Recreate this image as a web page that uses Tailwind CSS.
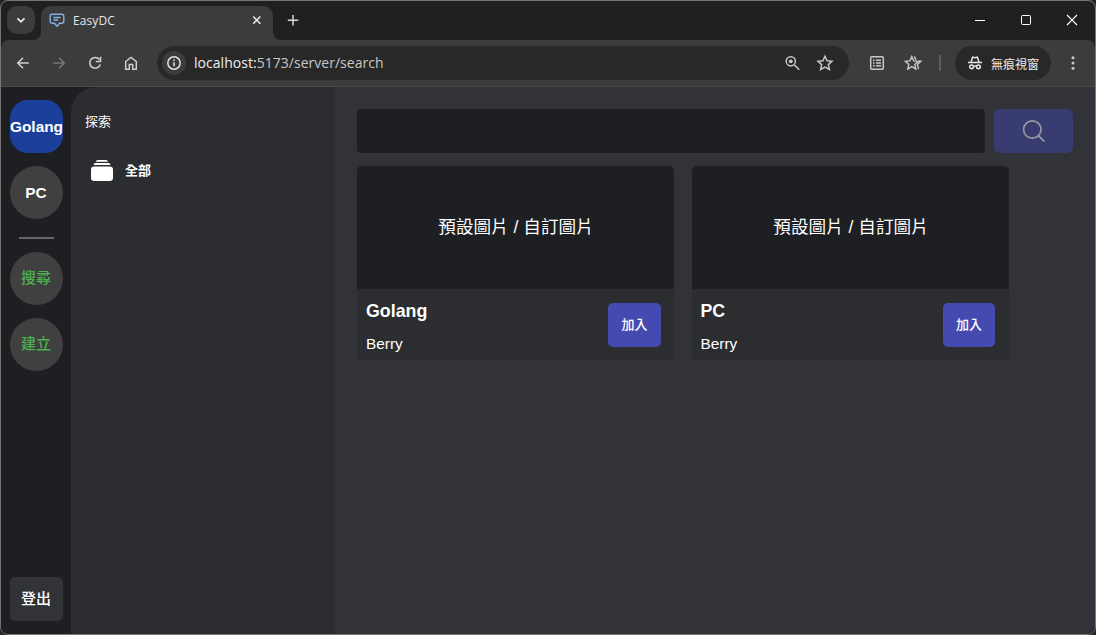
<!DOCTYPE html>
<html lang="zh-Hant">
<head>
<meta charset="utf-8">
<title>EasyDC</title>
<script src="https://cdn.jsdelivr.net/npm/@tailwindcss/browser@4"></script>
</head>
<body class="h-[635px] w-[1096px] overflow-hidden bg-[#23252a] font-['Liberation_Sans','Noto_Sans_CJK_TC',sans-serif] text-white">
<div class="flex h-[635px] w-[1096px] flex-col overflow-hidden rounded-lg border border-[#797474] bg-[#1f2120]">
  <!-- Tab strip -->
  <header class="flex h-[39px] shrink-0 pl-1.5">
    <button class="mt-[5px] flex size-7 items-center justify-center rounded-[10px] bg-[#3c3c3c]">
      <svg class="size-7" viewBox="0 0 28 28" fill="none" stroke="#e8e8e8" stroke-width="1.8"><path d="M10.500 12.300l3.500 3.500 3.500-3.500"/></svg>
    </button>
    <div class="relative mt-[5px] ml-1.5 flex h-[34px] w-[232px] rounded-t-[10px] bg-[#3c3c3c] pl-2">
      <svg class="absolute bottom-0 -left-2 size-2" viewBox="0 0 8 8" fill="#3c3c3c"><path d="M8 0v8H0a8 8 0 0 0 8-8z"/></svg>
      <svg class="absolute -right-2 bottom-0 size-2" viewBox="0 0 8 8" fill="#3c3c3c"><path d="M0 0v8h8a8 8 0 0 1-8-8z"/></svg>
      <svg class="mt-1.5 size-4" viewBox="0 0 16 16" fill="none" stroke="#83b0e8" stroke-width="1.4" stroke-linejoin="round"><path d="M3.200 2.300h9.600q2 0 2 2v5q0 2-2 2h-2.300L8 14.300l-2.500-3H3.200q-2 0-2-2v-5q0-2 2-2z"/><path d="M4.500 5.500h7M4.500 8h4.500"/></svg>
      <span class="mt-1.5 ml-2 w-[176px] font-['Open_Sans',sans-serif] text-[12px] leading-[18px] tracking-[0.1px] text-[#e6e6e6]">EasyDC</span>
      <svg class="mt-[5px] size-4" viewBox="0 0 16 16" fill="none" stroke="#e6e6e6" stroke-width="1.6"><path d="M4.200 5.500l7.200 7.200M11.400 5.500l-7.200 7.200"/></svg>
    </div>
    <svg class="mt-[11px] ml-3 size-4" viewBox="0 0 16 16" fill="none" stroke="#d8d8d8" stroke-width="1.5"><path d="M8 3v10.500M2.800 8.200h10.500"/></svg>
    <div class="mr-[15px] ml-auto mt-[11px] flex gap-[30px]">
      <svg class="size-4" viewBox="0 0 16 16" fill="none" stroke="#fff"><path d="M3 8.500h10"/></svg>
      <svg class="size-4" viewBox="0 0 16 16" fill="none" stroke="#fff"><rect x="3.500" y="3.500" width="9" height="9" rx="1"/></svg>
      <svg class="size-4" viewBox="0 0 16 16" fill="none" stroke="#fff" stroke-width="1.100"><path d="M3 3l10 10M13 3L3 13"/></svg>
    </div>
  </header>

  <!-- Toolbar -->
  <nav class="flex h-[47px] shrink-0 items-center rounded-t-lg border-b border-[#4b4b4b] bg-[#3c3c3c] pl-3">
    <div class="flex gap-4 pb-0.5">
      <svg class="mt-0.5 size-5" viewBox="0 0 20 20" fill="none" stroke="#cfcfcf" stroke-width="1.600"><path d="M15.800 10H5M10 4.800L4.800 10l5.200 5.200"/></svg>
      <svg class="mt-0.5 size-5" viewBox="0 0 20 20" fill="none" stroke="#777" stroke-width="1.600"><path d="M4.200 10H15M10 4.800l5.200 5.200-5.200 5.200"/></svg>
      <svg class="mt-0.5 size-5" viewBox="0 0 20 20" fill="none" stroke="#cfcfcf" stroke-width="1.600"><path d="M15.300 11.500A5.400 5.400 0 1 1 14.400 6.500"/><path d="M15.500 3.800v4.700h-4.700"/></svg>
      <svg class="mt-0.5 size-5" viewBox="0 0 20 20" fill="none" stroke="#cfcfcf" stroke-width="1.500"><path d="M4.700 8.500L10 4.400l5.300 4.100v7.700h-3.600v-4.700H8.300v4.700H4.700z"/></svg>
    </div>
    <div class="ml-4 flex h-[34px] w-[692px] items-center rounded-full bg-[#282828] pr-[15px] pl-[5px]">
      <span class="flex size-6 items-center justify-center rounded-full bg-[#3c3c3c]">
        <svg class="size-4" viewBox="0 0 16 16" fill="none" stroke="#e3e3e3" stroke-width="1.500"><circle cx="8" cy="8" r="6.200"/><path d="M8 7.200v4M8 4.600v1.500"/></svg>
      </span>
      <span class="ml-2 pb-px font-['Open_Sans',sans-serif] text-[14px] leading-5 tracking-[0.03px] text-[#c7c7c7]"><span class="text-[#efefef]">localhost:</span>5173/server/search</span>
      <svg class="ml-auto size-[18px]" viewBox="0 0 18 18" fill="none" stroke="#c7c7c7" stroke-width="1.500"><circle cx="7.800" cy="7.300" r="4.600"/><path d="M11.200 10.800l5 5"/><circle cx="7.800" cy="7.300" r="1.900" fill="#c7c7c7" stroke="none"/></svg>
      <svg class="ml-[15px] size-[18px]" viewBox="0 0 18 18" fill="none" stroke="#c7c7c7" stroke-width="1.500"><path d="M9 2.300l2.100 4.500 4.900.5-3.700 3.300 1.100 4.900L9 13l-4.400 2.500 1.100-4.900L2 7.300l4.900-.5z"/></svg>
    </div>
    <svg class="ml-[19px] size-[18px]" viewBox="0 0 18 18" fill="none" stroke="#c7c7c7" stroke-width="1.500"><rect x="2.700" y="2.700" width="12.600" height="12.600" rx="1"/><path d="M5 6.200h1.600M5 9h1.600M5 11.800h1.600M8 6.200h5M8 9h5M8 11.800h5" stroke-width="1.400"/></svg>
    <svg class="ml-[18px] size-[18px]" viewBox="0 0 18 18" fill="none" stroke="#c7c7c7" stroke-width="1.400"><path d="M7.800 2.600l1.900 4.300 4.600.4-3.500 3.100 1 4.700-4-2.500-4 2.500 1-4.700-3.500-3.100 4.600-.4zM10.400 2.400l1.500 3.500M14.500 7.300h2.400l-3.500 3.200 1.100 4.600"/></svg>
    <span class="ml-[17px] h-4 w-0.5 bg-[#5c5c5c]"></span>
    <div class="ml-3.5 flex h-[34px] w-24 items-center rounded-full bg-[#282828] pl-3">
      <svg class="size-4" viewBox="0 0 16 16" fill="none" stroke="#e6e6e6" stroke-width="1.500"><path d="M4.100 7l1.500-4.900L8 2.800l2.400-.7L11.900 7M1 7.400h14"/><circle cx="4.600" cy="11.800" r="1.900"/><circle cx="11.400" cy="11.800" r="1.900"/><path d="M6.500 11.300q1.500-.8 3 0"/></svg>
      <span class="ml-2 pt-px font-['Noto_Sans_CJK_TC',sans-serif] text-[12px] leading-4 text-[#ececec]">無痕視窗</span>
    </div>
    <svg class="ml-[14px] size-4" viewBox="0 0 16 16" fill="#c7c7c7"><circle cx="8" cy="2.800" r="1.500"/><circle cx="8" cy="8" r="1.500"/><circle cx="8" cy="13.200" r="1.500"/></svg>
  </nav>

  <!-- App -->
  <div class="flex min-h-0 flex-1 bg-[#1e1f22]">
    <aside class="flex w-[70px] shrink-0 flex-col items-center pt-[13px] pr-px pb-[13px] pl-[2px] text-[15px] font-bold">
      <div class="flex size-[53px] shrink-0 items-center justify-center rounded-[18px] bg-[#1d3f9c] text-[15.400px]">Golang</div>
      <div class="mt-[13px] flex size-[53px] shrink-0 items-center justify-center rounded-full bg-[#404040] pr-px text-[15.400px]">PC</div>
      <div class="mt-[18px] h-0.5 w-[35px] shrink-0 bg-[#656565]"></div>
      <div class="mt-[13px] flex size-[53px] shrink-0 items-center justify-center rounded-full bg-[#404040] pr-px font-medium text-[#4caf50]">搜尋</div>
      <div class="mt-[13px] flex size-[53px] shrink-0 items-center justify-center rounded-full bg-[#404040] pr-px font-medium text-[#4caf50]">建立</div>
      <button class="mt-auto flex h-11 w-[53px] shrink-0 items-center justify-center rounded-[5px] bg-[#313338] pr-px font-medium">登出</button>
    </aside>
    <section class="w-[264px] shrink-0 rounded-tl-[26px] bg-[#2b2d31] px-3.5 pt-[25px]">
      <h2 class="text-[13px] leading-5">探索</h2>
      <div class="mt-3 flex h-[53px] items-center rounded-md pl-1.5 shadow-[0_1px_1px_rgba(0,0,0,0.04)]">
        <svg class="h-[22px] w-[23px]" viewBox="0 0 23 22" fill="#fff"><path d="M4.700 1.700Q5 0 7 0h8q1.800 0 2 1.700zM2.500 4.900q.2-2 2-2h13q1.800 0 2 2z"/><rect y="6.400" width="22" height="14.600" rx="3.200"/></svg>
        <span class="ml-[11px] text-[13px] leading-5 font-bold">全部</span>
      </div>
    </section>
    <main class="min-w-0 flex-1 bg-[#313338] px-[22px] pt-[22px]">
      <div class="flex gap-[9px]">
        <div class="h-11 w-[628px] rounded-sm bg-[#1e1f22]"></div>
        <button class="flex h-11 w-[79px] items-center justify-center rounded-md bg-[#393c70]">
          <svg class="size-[26px]" viewBox="0 0 26 26" fill="none" stroke="#989aa3" stroke-width="1.700"><circle cx="11.300" cy="11.500" r="8.700"/><path d="M17.400 17.700l6 6"/></svg>
        </button>
      </div>
      <div class="mt-[13px] flex gap-[18px]">
        <article class="w-[317px] rounded-t-[5px] bg-[#2b2d31]">
          <div class="flex h-[123px] items-center justify-center rounded-t-[5px] bg-[#1e1f22] pl-px text-[17.600px]">預設圖片 / 自訂圖片</div>
          <div class="flex h-[71px] justify-between pr-[13px] pl-[9px]">
            <div class="pt-[11px]">
              <h3 class="text-[17.800px] leading-[22px] font-bold">Golang</h3>
              <p class="mt-3 text-[15.400px] leading-[20px]">Berry</p>
            </div>
            <button class="mt-3.5 h-11 w-[53px] rounded-[5px] bg-[#444ab0] text-[13px] font-medium">加入</button>
          </div>
        </article>
        <article class="w-[317px] rounded-t-[5px] bg-[#2b2d31]">
          <div class="flex h-[123px] items-center justify-center rounded-t-[5px] bg-[#1e1f22] pl-px text-[17.600px]">預設圖片 / 自訂圖片</div>
          <div class="flex h-[71px] justify-between pr-[14px] pl-[8.500px]">
            <div class="pt-[11px]">
              <h3 class="text-[17.800px] leading-[22px] font-bold">PC</h3>
              <p class="mt-3 text-[15.400px] leading-[20px]">Berry</p>
            </div>
            <button class="mt-3.5 h-11 w-[52px] rounded-[5px] bg-[#444ab0] text-[13px] font-medium">加入</button>
          </div>
        </article>
      </div>
    </main>
  </div>
</div>
</body>
</html>
